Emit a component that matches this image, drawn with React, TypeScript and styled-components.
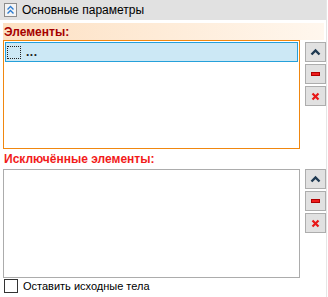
import React from 'react'
import styled, { createGlobalStyle } from 'styled-components'

const GlobalStyle = createGlobalStyle`
  html, body {
    margin: 0;
    padding: 0;
    background: #fff;
    overflow: hidden;
  }
  body {
    font-family: "Liberation Sans", Arial, sans-serif;
    font-size: 12px;
    line-height: 14px;
    color: #000;
  }
`

const Panel = styled.div`
  width: 326px;
  height: 297px;
  border-right: 1px solid #e6e6e6;
  display: flex;
  flex-direction: column;
`

const Header = styled.div`
  height: 20px;
  background: #e1e1e1;
  display: flex;
  align-items: center;
  padding-left: 4px;
  gap: 5px;
`

const CollapseBox = styled.div`
  width: 11px;
  height: 12px;
  border: 1px solid #8c8c8c;
  background: #f4f4f4;
  display: flex;
  align-items: center;
  justify-content: center;
`

const Body = styled.div`
  padding: 3px 0 0 3px;
  display: flex;
  flex-direction: column;
`

const Band = styled.div`
  height: 17px;
  width: 320px;
  display: flex;
  align-items: center;
  padding-left: 1px;
  background: linear-gradient(to right, #fde0c2, #fff7ee);
`

const Label = styled.div<{ $color: string }>`
  font-weight: bold;
  color: ${p => p.$color};
  font-size: 12px;
`

const PlainLabel = styled.div`
  height: 20px;
  display: flex;
  align-items: center;
  padding-left: 1px;
`

const Row = styled.div`
  display: flex;
  gap: 5px;
`

const ListBox = styled.div<{ $border: string }>`
  width: 294px;
  height: 105px;
  border: 1px solid ${p => p.$border};
  padding: 1px;
  background: #fff;
`

const Item = styled.div`
  height: 18px;
  border: 1px solid #26a0da;
  background: #cce8f5;
  display: flex;
  align-items: center;
  padding-left: 1px;
  gap: 5px;
`

const DashedIcon = styled.div`
  width: 12px;
  height: 11px;
  border: 1px dotted #222;
`

const Dots = styled.span`
  font-weight: bold;
  color: #222;
  letter-spacing: 0.5px;
`

const Buttons = styled.div<{ $offset: number }>`
  display: flex;
  flex-direction: column;
  gap: 2px;
  padding-top: ${p => p.$offset}px;
`

const SideButton = styled.div`
  width: 19px;
  height: 18px;
  border: 1px solid #adadad;
  background: #e1e1e1;
  display: flex;
  align-items: center;
  justify-content: center;
`

const CheckRow = styled.div`
  height: 14px;
  display: flex;
  align-items: center;
  gap: 5px;
  margin-top: 1px;
  padding-left: 1px;
  font-size: 11px;
`

const CheckBox = styled.div`
  width: 12px;
  height: 12px;
  border: 1px solid #333;
  background: #fff;
`

function UpIcon() {
  return (
    <svg width="11" height="8" viewBox="0 0 11 8">
      <path d="M1.5 6.5 L5.5 2.5 L9.5 6.5" fill="none" stroke="#1f3a52" strokeWidth="2.4" />
    </svg>
  )
}

function MinusIcon() {
  return (
    <svg width="9" height="4" viewBox="0 0 9 4">
      <rect x="0.5" y="0.5" width="8" height="3" fill="#ee1c1c" stroke="#b00000" strokeWidth="1" />
    </svg>
  )
}

function CrossIcon() {
  return (
    <svg width="9" height="9" viewBox="0 0 9 9">
      <path d="M1.5 1.5 L7.5 7.5 M7.5 1.5 L1.5 7.5" stroke="#e81818" strokeWidth="2.2" />
    </svg>
  )
}

function ButtonColumn({ offset }: { offset: number }) {
  return (
    <Buttons $offset={offset}>
      <SideButton><UpIcon /></SideButton>
      <SideButton><MinusIcon /></SideButton>
      <SideButton><CrossIcon /></SideButton>
    </Buttons>
  )
}

export default function App() {
  return (
    <>
      <GlobalStyle />
      <Panel>
        <Header>
          <CollapseBox>
            <svg width="9" height="10" viewBox="0 0 9 10">
              <path d="M1.5 4.5 L4.5 1.5 L7.5 4.5 M1.5 8.5 L4.5 5.5 L7.5 8.5" fill="none" stroke="#2b7bd0" strokeWidth="1.4" />
            </svg>
          </CollapseBox>
          <span>Основные параметры</span>
        </Header>
        <Body>
          <Band>
            <Label $color="#a50000">Элементы:</Label>
          </Band>
          <Row>
            <ListBox $border="#f0870f">
              <Item>
                <DashedIcon />
                <Dots>...</Dots>
              </Item>
            </ListBox>
            <ButtonColumn offset={2} />
          </Row>
          <PlainLabel>
            <Label $color="#f21b1b">Исключённые элементы:</Label>
          </PlainLabel>
          <Row>
            <ListBox $border="#acacac" />
            <ButtonColumn offset={0} />
          </Row>
          <CheckRow>
            <CheckBox />
            <span>Оставить исходные тела</span>
          </CheckRow>
        </Body>
      </Panel>
    </>
  )
}
